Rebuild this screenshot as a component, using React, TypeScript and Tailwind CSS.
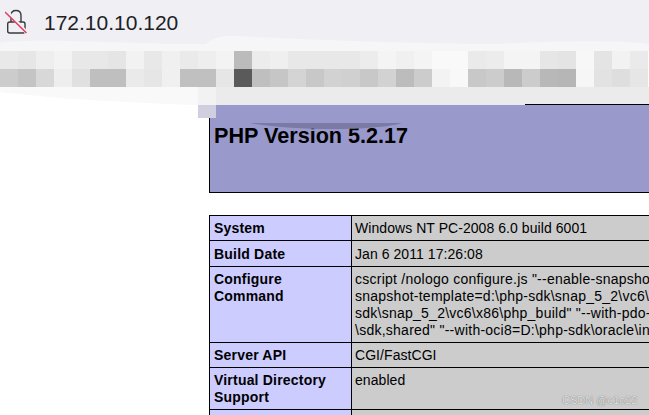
const topBlocks = ["#e9e9e9", "#e6e6e6", "#eeeeee", "#f3f3f3", "#e8e8e8", "#e8e8e8", "#e5e5e5", "#f2f2f2", "#e8e8e8", "#f0f0f0", "#eaeaea", "#eeeeee", "#f3f3f3", "#bbbbbb", "#ececec", "#efefef", "#e8e8e8", "#e8e8e8", "#e8e8e8", "#e8e8e8", "#ececec", "#f4f4f4", "#f0f0f0", "#f4f4f4", "#f9f9f9", "#f9f9f9", "#eaeaea", "#ececec", "#f4f4f4", "#f4f4f4", "#e6e6e6", "#e4e4e4", "#f7f7f7", "#e4e4e4", "#f2f2f2", "#eaeaea"];
const bottomBlocks = ["#cccccc", "#c4c4c4", "#d8d8d8", "#eeeeee", "#e0e0e0", "#bfbfbf", "#bfbfbf", "#eaeaea", "#e6e6e6", "#f0f0f0", "#c0c0c0", "#c0c0c0", "#e6e6e6", "#5a5a5a", "#bfbfbf", "#c6c6c6", "#d4d4d4", "#c8c8c8", "#d2d2d2", "#d0d0d0", "#c8c8c8", "#d2d2d2", "#bcbcbc", "#cccccc", "#f3f3f3", "#f8f8f8", "#c8c8c8", "#cccccc", "#b8b8b8", "#cccccc", "#b8b8b8", "#b6b6b6", "#f6f6f6", "#e2e2e2", "#dedede", "#e6e6e6"];

function BlockRow({ colors }: { colors: string[] }) {
  return (
    <div className="flex h-[18px]">
      {colors.map((c, i) => (
        <div key={i} className="w-[18px] shrink-0" style={{ backgroundColor: c }} />
      ))}
    </div>
  );
}

function InfoRow({ label, children, h }: { label: React.ReactNode; children: React.ReactNode; h: string }) {
  return (
    <tr className={h}>
      <td className="w-[142px] border border-black bg-[#ccccff] px-[4px] pb-[3px] pt-[4px] align-top font-bold leading-[17px] tracking-[0.2px]">{label}</td>
      <td className="border border-black bg-[#cccccc] px-[3px] pb-[3px] pt-[4px] align-top leading-[17px] tracking-[0.06px]">{children}</td>
    </tr>
  );
}

export default function App() {
  return (
    <div className="relative h-[415px] w-[649px] overflow-hidden bg-white font-['Liberation_Sans',Arial,sans-serif] text-[14px] text-black">
      <div className="flex h-[44px] items-center gap-[17px] bg-[#f0eff4] pl-[5px]">
        <svg width="22" height="26" viewBox="0 0 22 26" fill="none" className="mt-[-3px] translate-y-[1px]">
          <path d="M6 13V6.5C6 3.5 8 1.5 11 1.5S16 3.5 16 6.5V13" stroke="#3a3a3c" strokeWidth="1.4" />
          <rect x="2.7" y="13" width="17.3" height="11" rx="2" stroke="#3a3a3c" strokeWidth="1.4" />
          <path d="M1.5 2L22 24" stroke="#f0eff4" strokeWidth="3.5" />
          <path d="M0 3L21.5 24" stroke="#e8345a" strokeWidth="1.4" />
        </svg>
        <span className="text-[21px] leading-none text-[#202124]">172.10.10.120</span>
      </div>

      <div className="h-[7px] bg-[#f6f6f8]" />
      <BlockRow colors={topBlocks} />
      <BlockRow colors={bottomBlocks} />
      <div className="flex h-[18px]">
        <div className="w-[198px] bg-[#f9f9f9]" />
        <div className="w-[18px] bg-[#f2f2f2]" />
        <div className="flex-1 bg-[#ebebeb]" />
      </div>

      <div className="pl-[209px]">
        <div className="h-[88px] w-[600px] border-b border-l border-black bg-[#9999cc] pl-[4px] pt-[17px]">
          <h1 className="text-[21.6px] font-bold leading-[28px]">PHP Version 5.2.17</h1>
        </div>
        <table className="mt-[22px] w-[600px] table-fixed border-collapse whitespace-nowrap">
          <tbody>
            <InfoRow h="h-[25px]" label="System">Windows NT PC-2008 6.0 build 6001</InfoRow>
            <InfoRow h="h-[26px]" label={<span className="relative top-[1px]">Build Date</span>}>
              <span className="relative top-[1px]">Jan 6 2011 17:26:08</span>
            </InfoRow>
            <InfoRow
              h="h-[76px]"
              label={<>Configure<br />Command</>}
            >
              <div className="tracking-[0.25px]">
                cscript /nologo configure.js "--enable-snapshot-build"<br />
                snapshot-template=d:\php-sdk\snap_5_2\vc6\x86\template"<br />
                sdk\snap_5_2\vc6\x86\php_build" "--with-pdo-oci=D:\php-sdk<br />
                \sdk,shared" "--with-oci8=D:\php-sdk\oracle\instantclient10
              </div>
            </InfoRow>
            <InfoRow h="h-[25px]" label="Server API">CGI/FastCGI</InfoRow>
            <InfoRow h="h-[42px]" label={<>Virtual Directory<br />Support</>}>enabled</InfoRow>
            <InfoRow h="h-[25px]" label="Configuration">&nbsp;</InfoRow>
          </tbody>
        </table>
      </div>

      {/* smudges left by the redaction */}
      <svg className="absolute left-0 top-[34px]" width="649" height="17" viewBox="0 0 649 17">
        <path d="M0 9C30 4 120 9 205 11C212 4 222 1 240 2C300 6 400 9 480 10L490 12L500 10C550 7 620 6 649 10V17H0Z" fill="#f6f6f8" />
      </svg>
      <svg className="absolute left-0 top-[90px]" width="198" height="15" viewBox="0 0 198 15">
        <path d="M0 2C60 9 130 13 198 15H0Z" fill="#ffffff" />
      </svg>
      <div className="absolute left-[198px] top-[105px] h-[13px] w-[18px] bg-[#cfcfe0]" />
      <div className="absolute left-[525px] top-[104px] h-px w-[124px] bg-black" />
      <svg className="absolute left-[245px] top-[120px]" width="160" height="12" viewBox="0 0 160 12">
        <path d="M5 3H157C130 11 50 11 5 3Z" fill="#7a7aa4" />
      </svg>
      <div className="absolute left-[562px] top-[394px] text-[11px] leading-[13px] text-[#e4e4e4] [text-shadow:0_0_1px_#555]">CSDN @c1o22</div>
    </div>
  );
}
